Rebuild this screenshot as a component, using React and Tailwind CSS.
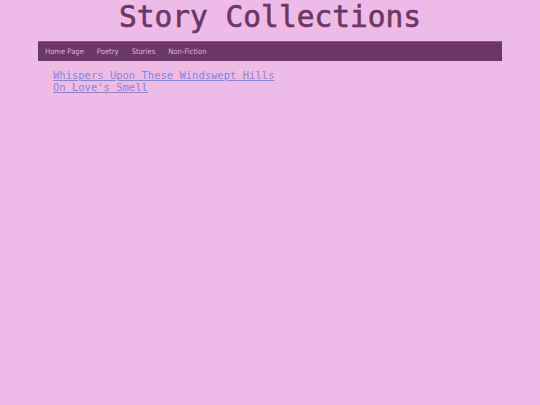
export default function App() {
  const links = ['Home Page', 'Poetry', 'Stories', 'Non-Fiction']
  const stories = ['Whispers Upon These Windswept Hills', "On Love's Smell"]

  return (
    <div className="min-h-[405px] bg-[#eebbe6]">
      <div className="w-[464px] mx-auto pt-[1px]">
        <h1 className="text-center text-[29.5px] leading-[32px] font-normal text-[#6b3763] [-webkit-text-stroke:0.6px_#6b3763] font-['DejaVu_Sans_Mono',monospace] h-[40px]">
          Story Collections
        </h1>
        <nav className="h-[20px] bg-[#6b3763] border-t border-[#8f5584] flex items-center pl-[7px] gap-[13px] font-['DejaVu_Sans_Condensed','DejaVu_Sans',sans-serif] [font-stretch:condensed] text-[7.6px] text-[#dcb5d6]">
          {links.map(l => (
            <a key={l} href="#" className="leading-none">{l}</a>
          ))}
        </nav>
        <ul className="pl-[15px] pt-[8px] font-['DejaVu_Sans_Mono',monospace] text-[10.5px] leading-[12px]">
          {stories.map(s => (
            <li key={s}>
              <a href="#" className="text-[#8585d6] underline">{s}</a>
            </li>
          ))}
        </ul>
      </div>
    </div>
  )
}
